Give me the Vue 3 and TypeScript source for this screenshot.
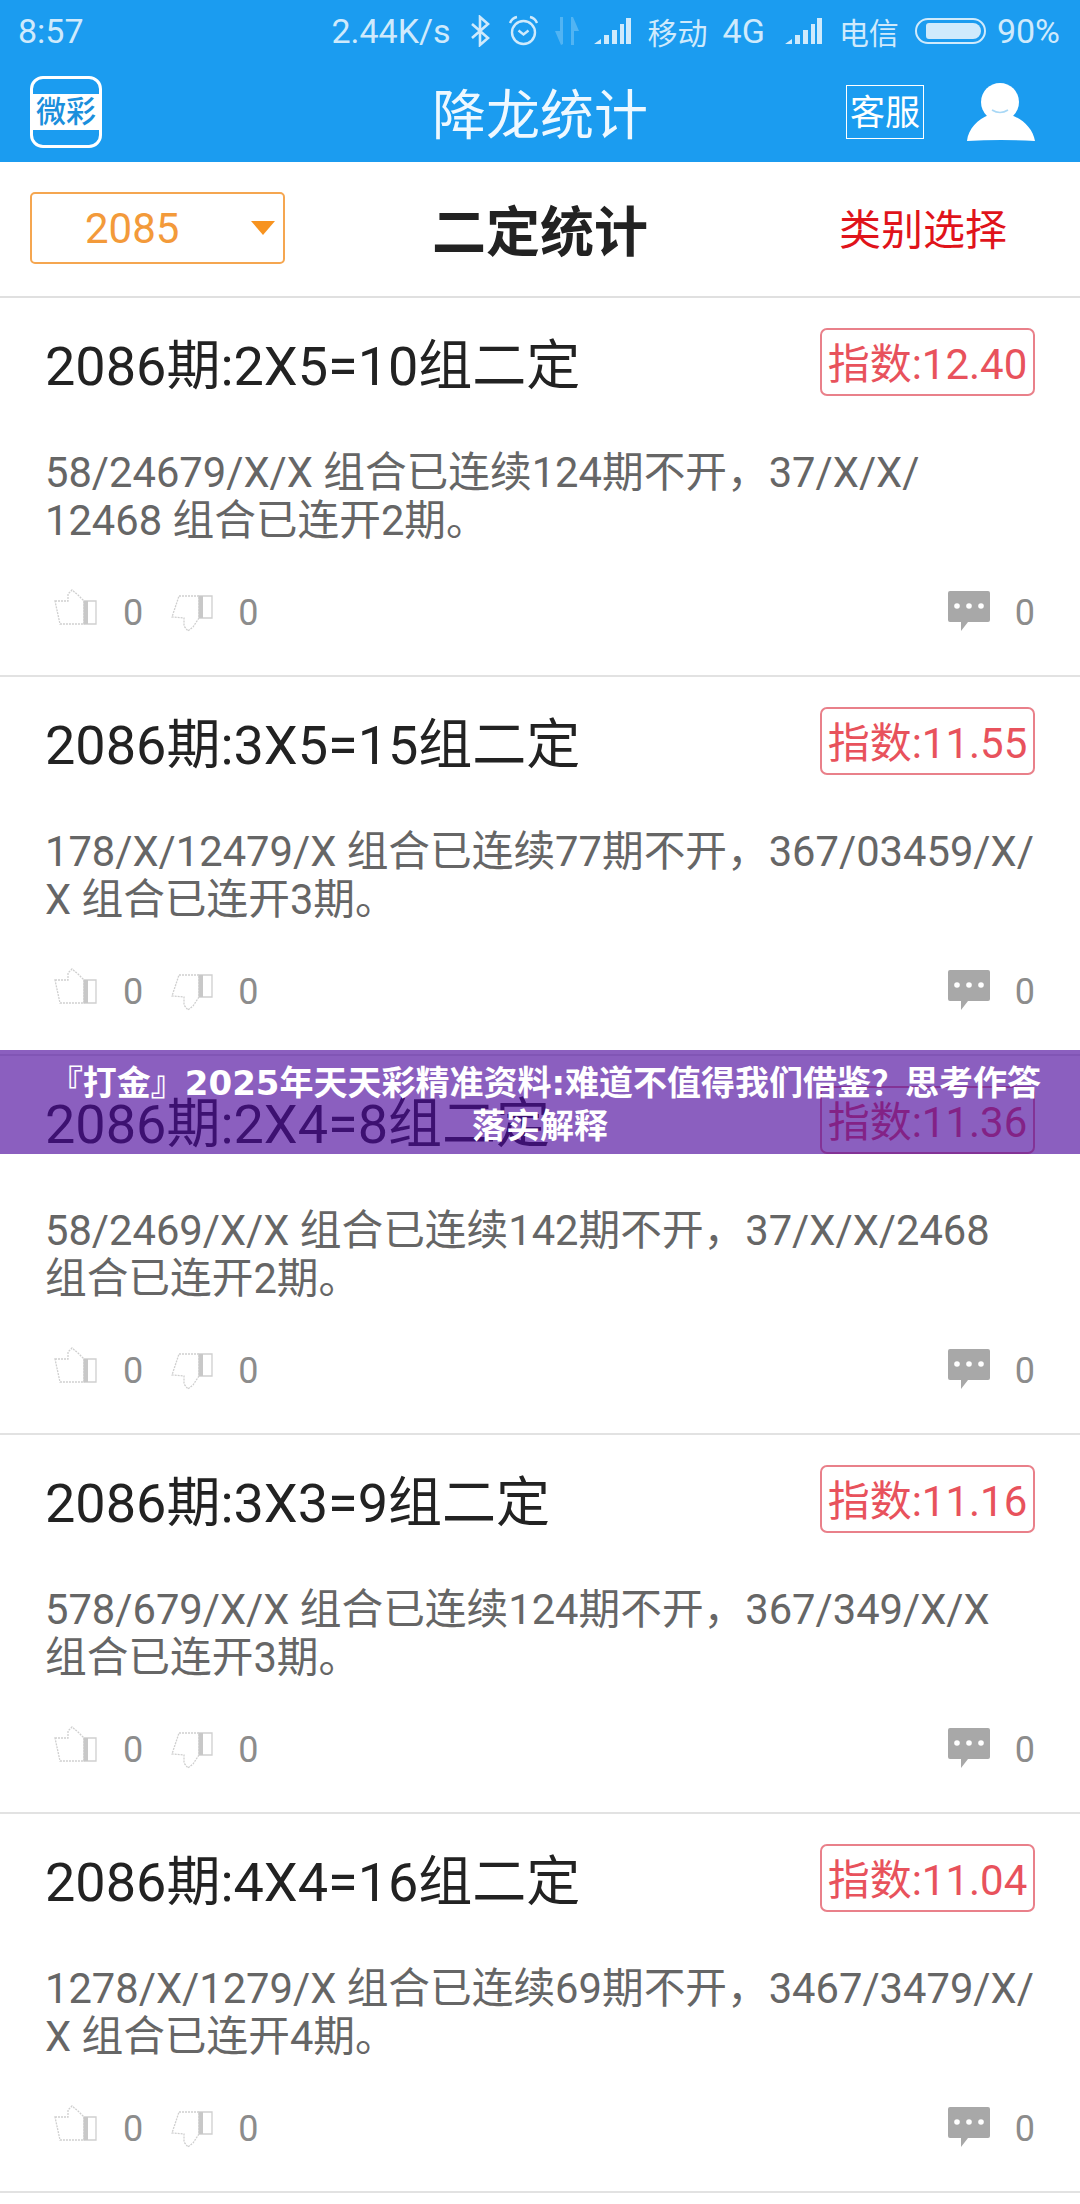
<script setup lang="ts">
interface Item { title: string; index: string; lines: [string, string] }
const items: Item[] = [
  { title: '2086期:2X5=10组二定', index: '12.40', lines: ['58/24679/X/X 组合已连续124期不开，37/X/X/', '12468 组合已连开2期。'] },
  { title: '2086期:3X5=15组二定', index: '11.55', lines: ['178/X/12479/X 组合已连续77期不开，367/03459/X/', 'X 组合已连开3期。'] },
  { title: '2086期:2X4=8组二定', index: '11.36', lines: ['58/2469/X/X 组合已连续142期不开，37/X/X/2468', '组合已连开2期。'] },
  { title: '2086期:3X3=9组二定', index: '11.16', lines: ['578/679/X/X 组合已连续124期不开，367/349/X/X', '组合已连开3期。'] },
  { title: '2086期:4X4=16组二定', index: '11.04', lines: ['1278/X/1279/X 组合已连续69期不开，3467/3479/X/', 'X 组合已连开4期。'] },
]
</script>

<template>
  <div class="page">
    <header class="bluebar">
      <div class="status">
        <span class="time">8:57</span>
        <div class="status-right">
          <span>2.44K/s</span>
          <svg class="bt" width="20" height="32" viewBox="0 0 20 32"><path d="M2 9l16 14-8 7V2l8 7L2 23" fill="none" stroke="currentColor" stroke-width="2.6"/></svg>
          <svg class="alarm" width="31" height="32" viewBox="0 0 31 32"><circle cx="15.5" cy="17.5" r="11.5" fill="none" stroke="currentColor" stroke-width="2.4"/><path d="M10.5 15.5l5 4 5-4" fill="none" stroke="currentColor" stroke-width="2.4"/><path d="M2 8q2-5 7-6M29 8q-2-5-7-6" fill="none" stroke="currentColor" stroke-width="2.4"/></svg>
          <svg class="arrows" width="26" height="30" viewBox="0 0 26 30"><path d="M9 1v27l-2 1L1 15h5V1zM17 1h2l6 14h-5v14h-3z" fill="currentColor" opacity=".3"/></svg>
          <svg class="sig" width="37" height="28" viewBox="0 0 37 28"><path d="M0 27l7-5v5zM10 18h5v9h-5zM18 13h5v14h-5zM26 7h4v20h-4zM32 1h5v26h-5z" fill="currentColor"/></svg>
          <span class="carrier">移动</span>
          <span class="g4">4G</span>
          <svg class="sig sig2" width="37" height="28" viewBox="0 0 37 28"><path d="M0 27l7-5v5zM10 18h5v9h-5zM18 13h5v14h-5zM26 7h4v20h-4zM32 1h5v26h-5z" fill="currentColor"/></svg>
          <span class="carrier">电信</span>
          <div class="battery"><div class="battery-fill"></div></div>
          <span class="pct">90%</span>
        </div>
      </div>
      <div class="appbar">
        <div class="logo"><div class="logo-band">微彩</div></div>
        <div class="apptitle">降龙统计</div>
        <div class="service">客服</div>
        <svg class="avatar" width="68" height="58" viewBox="0 0 68 58">
          <circle cx="33" cy="19" r="19" fill="#fff"/>
          <path d="M0 58c1-12 11-22 22-26h22c12 4 22 14 24 26q-34 -2 -68 0z" fill="#fff"/>
          <path d="M25 27q8 5 16 0" fill="none" stroke="#a9d8f6" stroke-width="1.6"/>
        </svg>
      </div>
    </header>

    <div class="subbar">
      <div class="select">
        <span class="select-value">2085</span>
        <span class="caret"></span>
      </div>
      <div class="subtitle">二定统计</div>
      <div class="category">类别选择</div>
    </div>

    <section v-for="item in items" :key="item.title" class="card">
      <div class="card-head">
        <div class="card-title">{{ item.title }}</div>
        <div class="badge">指数:{{ item.index }}</div>
      </div>
      <div class="card-body">
        <div v-for="line in item.lines" :key="line" class="body-line">{{ line }}</div>
      </div>
      <div class="card-foot">
        <svg class="thumb" width="44" height="37" viewBox="0 0 44 37">
          <path d="M1 12l13 0V5l4-4 6 5 6 6v23L6 35z" fill="#fff" stroke="#cfcfcf" stroke-width="1.3" stroke-dasharray="2 1"/>
          <path d="M30 12h12v23H30z" fill="#fff" stroke="#cfcfcf" stroke-width="1.3"/>
          <path d="M30 12h4v23h-4z" fill="#c8c8c8"/>
        </svg>
        <span class="count first">0</span>
        <svg class="thumb down" width="44" height="37" viewBox="0 0 44 37">
          <path d="M8 1h20v22l-6 9-5 4-4-5v-8L1 22z" fill="#fff" stroke="#cfcfcf" stroke-width="1.3" stroke-dasharray="2 1"/>
          <path d="M28 1h13v22H28z" fill="#fff" stroke="#cfcfcf" stroke-width="1.3"/>
          <path d="M28 1h4v22h-4z" fill="#c8c8c8"/>
        </svg>
        <span class="count second">0</span>
        <svg class="bubble" width="42" height="40" viewBox="0 0 42 40">
          <path d="M2 0h38a2 2 0 0 1 2 2v27a2 2 0 0 1-2 2H20l-7 9 0-9H2a2 2 0 0 1-2-2V2a2 2 0 0 1 2-2z" fill="#a8a8a8"/>
          <circle cx="9" cy="15" r="2.8" fill="#fff"/><circle cx="21" cy="15" r="2.8" fill="#fff"/><circle cx="33" cy="15" r="2.8" fill="#fff"/>
        </svg>
        <span class="count third">0</span>
      </div>
    </section>

    <div class="banner">『打金』2025年天天彩精准资料:难道不值得我们借鉴？思考作答落实解释</div>
  </div>
</template>

<style>
html, body { margin: 0; background: #fff; }
</style>

<style scoped>
.page {
  position: relative;
  width: 1080px;
  height: 2204px;
  overflow: hidden;
  background: #fff;
  font-family: Roboto, "Noto Sans CJK SC", sans-serif;
}
.bluebar { height: 162px; background: #1b9cf0; color: #fff; box-sizing: border-box; }
.status {
  height: 61px;
  display: flex;
  align-items: center;
  justify-content: space-between;
  padding: 0 20px 0 18px;
  color: #cfeafc;
  font-size: 34px;
  white-space: nowrap;
}
.status-right { display: flex; align-items: center; }
.bt { margin-left: 19px; }
.alarm { margin-left: 18px; }
.arrows { margin-left: 15px; }
.sig { margin-left: 14px; }
.sig2 { margin-left: 20px; }
.carrier { margin-left: 17px; font-size: 30px; }
.g4 { margin-left: 15px; }
.battery {
  margin: 0 11px 0 16px;
  width: 71px;
  height: 26px;
  box-sizing: border-box;
  border: 2px solid #cfeafc;
  border-radius: 13px;
  padding: 3px 3px 3px 9px;
}
.battery-fill { height: 100%; background: #cfeafc; border-radius: 3px 8px 8px 3px; }
.appbar { height: 101px; display: flex; align-items: center; padding: 0 0 0 30px; }
.logo {
  width: 72px;
  height: 72px;
  box-sizing: border-box;
  border: 3px solid #fff;
  border-radius: 13px;
  background: #1b9cf0;
  display: flex;
  align-items: center;
  overflow: hidden;
}
.logo-band {
  width: 100%;
  height: 36px;
  background: #fff;
  color: #1b8fdc;
  font-size: 30px;
  font-weight: 500;
  line-height: 36px;
  text-align: center;
  white-space: nowrap;
}
.apptitle { margin-left: 330px; font-size: 54px; width: 216px; white-space: nowrap; color: #eef8ff; }
.service {
  margin-left: 198px;
  width: 78px;
  height: 54px;
  box-sizing: border-box;
  border: 1.5px solid #fff;
  font-size: 35px;
  line-height: 56px;
  text-align: center;
  white-space: nowrap;
}
.avatar { margin-left: 43px; }
.subbar {
  height: 136px;
  display: flex;
  align-items: center;
  padding: 0 0 2px 30px;
  border-bottom: 2px solid #e0e0e0;
  box-sizing: border-box;
}
.select {
  width: 255px;
  height: 72px;
  box-sizing: border-box;
  border: 2px solid #f5a650;
  border-radius: 5px;
  display: flex;
  align-items: center;
  color: #f39a3a;
}
.select-value { margin-left: 53px; font-size: 42px; }
.caret {
  margin-left: 72px;
  width: 0;
  height: 0;
  border-left: 12px solid transparent;
  border-right: 12px solid transparent;
  border-top: 14px solid #f79320;
}
.subtitle { margin-left: 147px; width: 216px; font-size: 54px; font-weight: 700; color: #222; white-space: nowrap; }
.category { margin: -4px 0 0 191px; font-size: 42px; color: #e0131a; white-space: nowrap; }
.card {
  height: 379px;
  box-sizing: border-box;
  border-bottom: 2px solid #e2e2e2;
  padding: 30px 45px 0;
  display: flex;
  flex-direction: column;
}
.card-head { display: flex; align-items: center; justify-content: space-between; height: 68px; }
.card-title { font-size: 54px; color: #222; white-space: nowrap; margin-top: -2px; }
.badge {
  width: 215px;
  height: 68px;
  box-sizing: border-box;
  border: 2px solid #e9808a;
  border-radius: 7px;
  color: #e8525c;
  font-size: 42px;
  line-height: 70px;
  text-align: center;
  white-space: nowrap;
}
.card-body {
  margin: 53px 0 0;
  font-size: 41.7px;
  line-height: 48px;
  height: 96px;
  color: #666;
}
.body-line { white-space: nowrap; }
.card-foot { margin-top: 46px; height: 44px; display: flex; align-items: center; }
.thumb { margin-left: 9px; flex: none; margin-top: -12px; }
.thumb.down { margin-left: 28px; margin-top: 0; }
.count { font-size: 36px; color: #8c8c8c; }
.first { margin-left: 25px; }
.second { margin-left: 23px; }
.bubble { margin-left: auto; margin-top: -4px; flex: none; }
.third { margin-left: 25px; }
.banner {
  position: absolute;
  left: 0;
  right: 0;
  top: 1050px;
  height: 104px;
  box-sizing: border-box;
  padding: 12px 30px 0;
  background: rgba(77, 9, 157, 0.65);
  color: #fff;
  font-family: "DejaVu Sans", "Noto Sans CJK SC", sans-serif;
  font-size: 34px;
  font-weight: 700;
  line-height: 43px;
  text-align: center;
  text-indent: 10px;
}
</style>
